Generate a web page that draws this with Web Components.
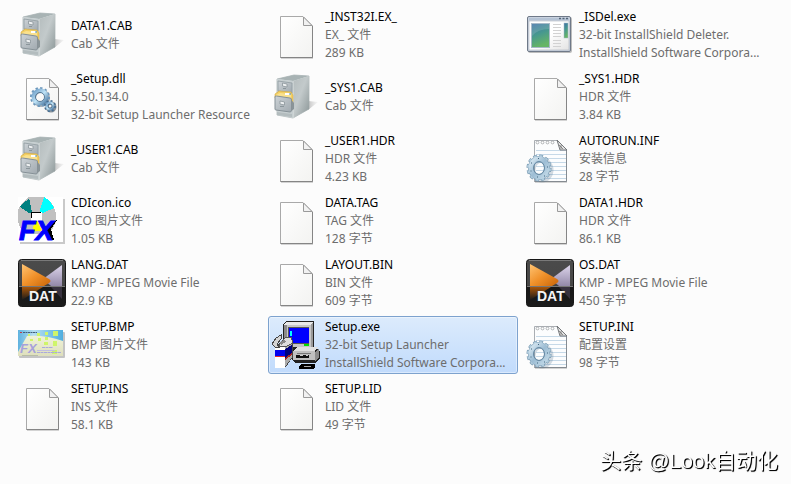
<!DOCTYPE html>
<html lang="zh-CN">
<head>
<meta charset="utf-8">
<title>Setup</title>
<style>
  body {
    margin: 0;
    background: #fcfcfc;
    font-family: "Noto Sans", "Noto Sans CJK SC", sans-serif;
    font-size: 12px;
    line-height: 18px;
    color: #000;
  }
</style>
</head>
<body>
<file-list>
  <file-item icon="cabinet">DATA1.CAB<span slot="info">Cab 文件</span></file-item>
  <file-item icon="page">_INST32I.EX_<span slot="info">EX_ 文件</span><span slot="info">289 KB</span></file-item>
  <file-item icon="program">_ISDel.exe<span slot="info">32-bit InstallShield Deleter.</span><span slot="info">InstallShield Software Corpora...</span></file-item>

  <file-item icon="library">_Setup.dll<span slot="info">5.50.134.0</span><span slot="info">32-bit Setup Launcher Resource</span></file-item>
  <file-item icon="cabinet">_SYS1.CAB<span slot="info">Cab 文件</span></file-item>
  <file-item icon="page">_SYS1.HDR<span slot="info">HDR 文件</span><span slot="info">3.84 KB</span></file-item>

  <file-item icon="cabinet">_USER1.CAB<span slot="info">Cab 文件</span></file-item>
  <file-item icon="page">_USER1.HDR<span slot="info">HDR 文件</span><span slot="info">4.23 KB</span></file-item>
  <file-item icon="config">AUTORUN.INF<span slot="info">安装信息</span><span slot="info">28 字节</span></file-item>

  <file-item icon="disc">CDIcon.ico<span slot="info">ICO 图片文件</span><span slot="info">1.05 KB</span></file-item>
  <file-item icon="page">DATA.TAG<span slot="info">TAG 文件</span><span slot="info">128 字节</span></file-item>
  <file-item icon="page">DATA1.HDR<span slot="info">HDR 文件</span><span slot="info">86.1 KB</span></file-item>

  <file-item icon="movie">LANG.DAT<span slot="info">KMP - MPEG Movie File</span><span slot="info">22.9 KB</span></file-item>
  <file-item icon="page">LAYOUT.BIN<span slot="info">BIN 文件</span><span slot="info">609 字节</span></file-item>
  <file-item icon="movie">OS.DAT<span slot="info">KMP - MPEG Movie File</span><span slot="info">450 字节</span></file-item>

  <file-item icon="bitmap">SETUP.BMP<span slot="info">BMP 图片文件</span><span slot="info">143 KB</span></file-item>
  <file-item icon="installer" selected>Setup.exe<span slot="info">32-bit Setup Launcher</span><span slot="info">InstallShield Software Corpora...</span></file-item>
  <file-item icon="config">SETUP.INI<span slot="info">配置设置</span><span slot="info">98 字节</span></file-item>

  <file-item icon="page">SETUP.INS<span slot="info">INS 文件</span><span slot="info">58.1 KB</span></file-item>
  <file-item icon="page">SETUP.LID<span slot="info">LID 文件</span><span slot="info">49 字节</span></file-item>
</file-list>
<author-mark>头条 @Look自动化</author-mark>

<script>
/**
 * Icon artwork, all on a 48x48 grid
 */
const PAGE = `
  <defs><linearGradient id="paper" x1="0" y1="0" x2="1" y2="1">
    <stop offset="0" stop-color="#fff"/><stop offset="1" stop-color="#f3f3f1"/>
  </linearGradient></defs>
  <path d="M9 6H32L41 15V48H9z" fill="#000" opacity=".16"/>
  <path d="M8.500 5.500H31L40.500 15V46.500H8.500z" fill="url(#paper)" stroke="#a9a9a9"/>
  <path d="M40.500 15V46.500H8.500" fill="none" stroke="#858585"/>
  <path d="M31.500 6V14.500H40z" fill="#f1f1f1" stroke="#9a9a9a"/>`;

const GEAR_FILL = `
  <linearGradient id="steel" x1="0" y1="0" x2="1" y2="1">
    <stop offset="0" stop-color="#d8e8f2"/><stop offset=".5" stop-color="#9dbdd4"/><stop offset="1" stop-color="#c3dae8"/>
  </linearGradient>`;

const ICONS = {
  page: PAGE,

  library: `${PAGE}
    <defs><linearGradient id="blue" x1="0" y1="0" x2="1" y2="1">
      <stop offset="0" stop-color="#6f9fc8"/><stop offset=".5" stop-color="#bfe3f6"/><stop offset="1" stop-color="#4d7aa3"/>
    </linearGradient></defs>
    <g fill="none">
      <circle cx="23" cy="25" r="7" stroke="#1e3850" stroke-opacity=".4" stroke-width="4"/>
      <circle cx="22" cy="24" r="9" stroke="#6c97bb" stroke-width="2" stroke-dasharray="2.350 2.350"/>
      <circle cx="22" cy="24" r="6.500" stroke="url(#blue)" stroke-width="4"/>
      <circle cx="22" cy="24" r="4.500" stroke="#3d6384" stroke-width=".8"/>
      <circle cx="33" cy="34" r="4" stroke="#1c2f42" stroke-opacity=".5" stroke-width="3"/>
      <circle cx="32" cy="33" r="5" stroke="#456d91" stroke-width="2" stroke-dasharray="1.960 1.960"/>
      <circle cx="32" cy="33" r="3.300" stroke="url(#blue)" stroke-width="2.400"/>
      <circle cx="32" cy="33" r="2" stroke="#294b69" stroke-width=".7"/>
    </g>`,

  cabinet: `
    <defs>
      <linearGradient id="side" x1="0" y1="0" x2="1" y2="1">
        <stop offset="0" stop-color="#b4bcbd"/><stop offset=".45" stop-color="#c3cacb"/><stop offset="1" stop-color="#8a9596"/>
      </linearGradient>
      <linearGradient id="front" x1="0" y1="0" x2="1" y2="1">
        <stop offset="0" stop-color="#cdd3d7"/><stop offset="1" stop-color="#a0a9af"/>
      </linearGradient>
      <linearGradient id="fade"><stop offset="0" stop-color="#999" stop-opacity=".6"/><stop offset="1" stop-color="#bbb" stop-opacity=".1"/></linearGradient>
    </defs>
    <path d="M36 28L46 29L36 37z" fill="url(#fade)"/>
    <path d="M5 6L22 2L37 3V36L21 45L5 42z" fill="#e0e6e6" stroke="#a5afb0" stroke-width=".7"/>
    <path d="M5 6L22 2L37 3L21 8z" fill="#a8b3b4"/>
    <path d="M21 8L37 3V36L21 45z" fill="url(#side)"/>
    <path d="M21 8V45" stroke="#dbe2e2"/>
    <path d="M5 6L21 8V45L5 42z" fill="#c6ced0"/>
    <path d="M6 8L20 10V20L6 18z" fill="url(#front)" stroke="#919ca1" stroke-width=".8"/>
    <path d="M10.500 10L15 11V14L10.500 13z" fill="#eef1f2" stroke="#8b969b" stroke-width=".8"/>
    <path d="M11 15.500H14" stroke="#8b969b"/>
    <path d="M5 19L20 20V26H5z" fill="#7d8385"/>
    <path d="M3 21L7 18L19 19L21 22V32L16 31L3 25z" fill="#f3cf62" stroke="#d3aa44" stroke-width=".6"/>
    <path d="M4 22L8 20L19 21V29L4 25z" fill="#fae18d"/>
    <path d="M13 20H18V22H13z" fill="#fff"/><path d="M17 21H19" stroke="#4c8fc0"/>
    <path d="M3 24Q3 22.500 4.500 23L18 25Q19.500 25 19.500 27V37Q19.500 39 18 39L4 37Q3 37 3 36z" fill="url(#front)" stroke="#869197"/>
    <path d="M19.500 27L22 30V36L19.500 38z" fill="#8a9498"/>
    <path d="M8 28L12.500 29V32L8 31z" fill="#eef1f2" stroke="#8b969b" stroke-width=".8"/>
    <path d="M8 33.500H12" stroke="#8b969b"/>
    <path d="M5 39L20 41V44L5 42z" fill="#b3bcbe"/>`,

  program: `
    <defs>
      <linearGradient id="shot" x1="0" y1="0" x2=".3" y2="1">
        <stop offset="0" stop-color="#3f71a6"/><stop offset=".5" stop-color="#47988f"/><stop offset="1" stop-color="#66b565"/>
      </linearGradient>
      <linearGradient id="pane" x1="0" y1="0" x2="1" y2="1"><stop offset=".5" stop-color="#fff"/><stop offset="1" stop-color="#e3e3e3"/></linearGradient>
    </defs>
    <rect x="2" y="6" width="44" height="36" rx="2" fill="#000" opacity=".25"/>
    <rect x="1.500" y="5.500" width="43" height="35" rx="1.500" fill="#c9d2df" stroke="#6f7988"/>
    <path d="M3 7H43V9H3z" fill="#b5c3d5"/>
    <path d="M33 7.500H35M36.500 7.500H38.500M40 7.500H42" stroke="#536477" stroke-width="1.500"/>
    <rect x="3" y="10" width="40" height="29" fill="url(#pane)" stroke="#aeb5bf" stroke-width=".6"/>
    <rect x="5.500" y="12.500" width="18" height="24" fill="url(#shot)" stroke="#a8bac8"/>
    <path d="M6 13H23V18Q12 18 6 25z" fill="#fff" opacity=".14"/>
    <path d="M27 13.500H35M27 16.500H35M27 19.500H35M27 22.500H35M27 25.500H35M27 29.500H35M27 32.500H35M27 35.500H35" stroke="#d2d2d2"/>
    <rect x="38" y="12" width="4" height="15" fill="url(#shot)" stroke="#a8bac8" stroke-width=".5"/>`,

  config: `
    <defs>${GEAR_FILL}</defs>
    <path d="M9 6H32L41 15V48H9z" fill="#000" opacity=".16"/>
    <path d="M8.500 5.500H31L40.500 15V46.500H8.500z" fill="#fcfdfe" stroke="#aaaeb3"/>
    <path d="M10 15.500H40M10 19.500H40M10 23.500H40M10 27.500H40M10 31.500H40M10 35.500H40M10 39.500H40M10 43.500H40" stroke="#c6d9e8"/>
    <path d="M40.500 15V46.500H8.500" fill="none" stroke="#858b91"/>
    <path d="M31 5L41 15H34z" fill="#e2e2e2" stroke="#74777a"/>
    <path d="M33 10L37 14M35 10V14" stroke="#777" stroke-width=".8"/>
    <g fill="#fff" stroke="#a0a3a6" stroke-width=".8">
      <circle cx="11.500" cy="7.500" r="1.400"/>
      <circle cx="16.500" cy="7.500" r="1.400"/>
      <circle cx="21.500" cy="7.500" r="1.400"/>
      <circle cx="26.500" cy="7.500" r="1.400"/>
    </g>
    <g fill="none">
      <ellipse cx="16" cy="35" rx="9" ry="10" stroke="#53728a" stroke-opacity=".25" stroke-width="5"/>
      <ellipse cx="13" cy="33" rx="11" ry="12" stroke="#7899b1" stroke-width="3" stroke-dasharray="3.600 2.420"/>
      <ellipse cx="13" cy="33" rx="8" ry="9" stroke="#7d9fb8" stroke-width="6"/>
      <ellipse cx="13" cy="33" rx="11" ry="12" stroke="#b0cbdc" stroke-width="2" stroke-dasharray="2.600 3.420" stroke-dashoffset="-.5"/>
      <ellipse cx="13" cy="33" rx="8" ry="9" stroke="url(#steel)" stroke-width="5"/>
      <ellipse cx="13" cy="33" rx="5.500" ry="6.500" stroke="#688aa4"/>
    </g>
    <path d="M12 23.500H13M5 28H6M4.500 36H5.500M21 32H22M18 41H19M11 42H12" stroke="#41647f"/>`,

  disc: `
    <path d="M2 2H47V47H2z" fill="#000" opacity=".2"/>
    <path d="M0 0H45V45H0z" fill="#fff"/>
    <g shape-rendering="crispEdges">
      <path d="M11 0H26L32 4L36 10L38 17V25L34 33L27 37H9L3 32L0 25V13L4 6z" fill="#c0c0c0"/>
      <path d="M2 10L5 6L11 2V0L14 15L11 16z" fill="#008080"/>
      <path d="M26 0L32 4L36 11L27 15L22 18V13z" fill="#0ff"/>
      <path d="M13 15H24V27H13z" fill="#fff"/>
      <path d="M13 21V15H23" fill="none" stroke="#000"/>
      <path d="M16 24H22V30H28V34H15z" fill="#ff0"/>
      <path d="M35 25L39 23L33 32L36 43H31L28 34z" fill="#000"/>
    </g>
    <text x="1" y="43" font-family="Liberation Sans" font-size="27" font-weight="bold" font-style="italic" fill="#00f" stroke="#00f">FX</text>`,

  movie: `
    <defs>
      <linearGradient id="case" x1="0" y1="0" x2="0" y2="1">
        <stop offset="0" stop-color="#4b4b4b"/><stop offset=".55" stop-color="#464646"/><stop offset=".58" stop-color="#171717"/><stop offset="1" stop-color="#1b1b1b"/>
      </linearGradient>
      <linearGradient id="amber" x1="0" y1="0" x2="1" y2="1">
        <stop offset="0" stop-color="#ffc473"/><stop offset=".5" stop-color="#f0912a"/><stop offset="1" stop-color="#c96508"/>
      </linearGradient>
      <linearGradient id="lilac" x1="0" y1="0" x2="0" y2="1"><stop offset="0" stop-color="#ddd5eb"/><stop offset="1" stop-color="#9389a9"/></linearGradient>
      <linearGradient id="glow" x1="0" y1="0" x2="0" y2="1"><stop offset="0" stop-color="#a85508"/><stop offset="1" stop-color="#1b1b1b"/></linearGradient>
    </defs>
    <rect x=".5" y=".5" width="47" height="47" rx="3" fill="url(#case)" stroke="#171717"/>
    <path d="M3 1.500H45" stroke="#7a7a7a"/>
    <path d="M44 6V27H33L25 20z" fill="url(#lilac)"/>
    <path d="M44 28V40L33 28z" fill="#37323f"/>
    <path d="M4 5L31 20Q34 22 31 24L26 27H4z" fill="url(#amber)"/>
    <path d="M4 28H25L4 41z" fill="url(#glow)"/>
    <path d="M1 27.500H47" stroke="#777"/>
    <text x="11" y="42" font-family="Liberation Sans" font-size="14" font-weight="bold" fill="#f4f4f4">DAT</text>`,

  bitmap: `
    <defs>
      <linearGradient id="sky"><stop offset="0" stop-color="#5fb2df"/><stop offset=".35" stop-color="#b7dff1"/><stop offset="1" stop-color="#4faedf"/></linearGradient>
      <linearGradient id="sand" x1="0" y1="0" x2="0" y2="1"><stop offset="0" stop-color="#f0f3d8"/><stop offset="1" stop-color="#dedfbd"/></linearGradient>
    </defs>
    <rect x="1" y="11" width="46" height="26" rx="1" fill="#000" opacity=".22"/>
    <rect y="9" width="45" height="26" fill="url(#sky)"/>
    <path d="M9 15Q28 14 45 20V35H0V31z" fill="url(#sand)"/>
    <path d="M2 11.500H4" stroke="#c43c48"/><path d="M5 11.500H19" stroke="#426079" stroke-dasharray="2 .5"/>
    <path d="M10 13h2v2h-2zM19 12h3v3h-3zM27 11h3v3h-3zM35 10h5v5h-5zM12 18h3v2h-3zM20 17h3v3h-3zM27 16h3v3h-3zM35 20h4v5h-4zM26 21h4v3h-4zM34 29h5v4h-5z" fill="#cff56a"/>
    <path d="M24 26.500H35M19 31.500H43" stroke="#aaa8dd" stroke-dasharray="3 .5"/>
    <path d="M19 29.500H37" stroke="#c2bfe0"/>
    <path d="M4 34.500H20" stroke="#b8bda5"/>
    <text x="2" y="32" font-family="Liberation Sans" font-size="13" font-weight="bold" font-style="italic" fill="#a6a0dc">FX</text>`,

  installer: `
    <g shape-rendering="crispEdges">
      <path d="M14 0H42V26L40 28H46L48 31V38L43 42H24L20 39V27H11V4z" fill="#222"/>
      <path d="M12 5L15 1V25H12z" fill="#8a8a8a"/>
      <path d="M15 1H41V26H15z" fill="#c6c6c6"/>
      <path d="M14 1H41V4H12z" fill="#e8e8e8"/>
      <path d="M39 3L41 1V26H39z" fill="#999"/>
      <path d="M16 6H37V23H16z" fill="#555"/>
      <path d="M17 7H37V22H17z" fill="#00f"/>
      <path d="M18 10H20V15H18z" fill="#0ff"/>
      <path d="M32 23H37V25H32z" fill="#0d0"/>
      <path d="M22 29L25 26H46L42 31H22z" fill="#e0e0e0"/>
      <path d="M21 30H43V39H21z" fill="#c0c0c0"/>
      <path d="M43 31L47 28V37L43 40z" fill="#8c8c8c"/>
      <path d="M24 34H37V37H24z" fill="#111"/>
      <path d="M28 34H31V35H28zM34 34H36V35H34z" fill="#ccc"/>
      <path d="M25 32H39V33H25z" fill="#777"/>
      <path d="M3 24L17 19L21 22V36L13 47H3z" fill="#444"/>
      <path d="M3 25H13V47H3z" fill="#fff"/>
      <path d="M3 29H13V36H3z" fill="#00e"/>
      <path d="M3 35H13V36H3z" fill="#e42b30"/>
      <path d="M13 25L20 21V36L13 46z" fill="#aaa"/>
      <path d="M13 28L20 24V32L13 37z" fill="#00007f"/>
      <path d="M13 37L20 32V34L13 39z" fill="#a22"/>
      <path d="M0 23L4 17L9 14V18L5 23L7 26H3z" fill="#d4d4d4" stroke="#444"/>
      <path d="M10 20L13 17L19 16L21 22L13 26L7 25z" fill="#dedede" stroke="#555"/>
      <path d="M7 22L12 19L14 21L9 24z" fill="#888"/>
      <path d="M29 43H43V46L41 48H27V46z" fill="#000"/>
      <path d="M32 45H39V46H32z" fill="#aaa"/>
    </g>`,
};

/**
 * Base class: clones a template into an open shadow root
 */
class ExplorerElement extends HTMLElement {
  constructor() {
    super();
    this.attachShadow({ mode: 'open' });
  }

  setContent(html, styles = '') {
    const template = document.createElement('template');
    template.innerHTML = `<style>${styles}</style>${html}`;
    this.shadowRoot.replaceChildren(template.content.cloneNode(true));
  }
}

/**
 * Tile view of a folder
 */
class FileList extends ExplorerElement {
  connectedCallback() {
    this.setAttribute('role', 'listbox');
    this.setContent('<slot></slot>', `
      :host {
        display: grid;
        grid-template-columns: repeat(auto-fill, 250px);
        grid-auto-rows: minmax(58px, auto);
        gap: 4px;
        padding: 6px 4px 52px 14px;
      }
    `);
  }
}

/**
 * Icon on the left, file name and up to two info lines on the right
 */
class FileItem extends ExplorerElement {
  connectedCallback() {
    this.setAttribute('role', 'option');
    this.setAttribute('aria-selected', this.hasAttribute('selected'));
    this.setContent(`
      <file-icon name="${this.getAttribute('icon')}"></file-icon>
      <div class="text">
        <div class="name"><slot></slot></div>
        <slot name="info"></slot>
      </div>
    `, `
      :host {
        display: flex;
        align-items: center;
        gap: 5px;
        box-sizing: border-box;
        padding: 0 3px;
        border: 1px solid transparent;
        border-radius: 3px;
        white-space: nowrap;
      }
      :host([selected]) {
        border-color: #7da2ce;
        background: linear-gradient(#dcebfc, #c1dbfc);
        box-shadow: inset 0 0 0 1px rgba(255, 255, 255, 0.4);
      }
      .text {
        min-width: 0;
      }
      ::slotted(span) {
        display: block;
        color: #6d6d6d;
      }
    `);
  }
}

class FileIcon extends ExplorerElement {
  connectedCallback() {
    this.setContent(`
      <svg width="48" height="48" viewBox="0 0 48 48" aria-hidden="true">${ICONS[this.getAttribute('name')]}</svg>
    `, `
      :host {
        display: block;
        flex: none;
      }
      svg {
        display: block;
        overflow: visible;
      }
    `);
  }
}

/**
 * Signature laid over the bottom right corner
 */
class AuthorMark extends ExplorerElement {
  connectedCallback() {
    this.setContent('<slot></slot>', `
      :host {
        position: fixed;
        right: 13px;
        bottom: 9px;
        font-family: "Liberation Sans", "Noto Sans CJK SC", sans-serif;
        font-size: 21px;
        line-height: 28px;
        color: #fff;
        text-shadow: 1px 1px 1px #000, 1px 1px 0 #333;
        pointer-events: none;
      }
    `);
  }
}

customElements.define('file-icon', FileIcon);
customElements.define('file-item', FileItem);
customElements.define('file-list', FileList);
customElements.define('author-mark', AuthorMark);
</script>
</body>
</html>
